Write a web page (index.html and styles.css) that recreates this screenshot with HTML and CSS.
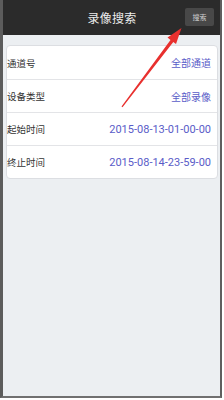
FILE: index.html
```html
<!DOCTYPE html>
<html>
<head>
<meta charset="utf-8">
<link rel="stylesheet" href="styles.css">
</head>
<body>
<div class="device">
  <header class="topbar">
    <div class="title">录像搜索</div>
    <button class="search-btn">搜索</button>
  </header>
  <main class="content">
    <div class="card">
      <div class="row"><span class="label">通道号</span><span class="value">全部通道</span></div>
      <div class="row"><span class="label">设备类型</span><span class="value">全部录像</span></div>
      <div class="row"><span class="label">起始时间</span><span class="value num">2015-08-13-01-00-00</span></div>
      <div class="row"><span class="label">终止时间</span><span class="value num">2015-08-14-23-59-00</span></div>
    </div>
  </main>
  <svg class="arrow" width="224" height="120" viewBox="0 0 224 120">
    <path d="M121.5 106.5 L170.5 40 L167.5 37.5 L181.5 28 L176 44 L173.3 42 L122.5 107.2 Z" fill="#e8302e"/>
  </svg>
</div>
</body>
</html>
```
FILE: styles.css
```css
html, body {
  margin: 0;
  padding: 0;
  background: #ffffff;
}
body {
  width: 224px;
  height: 400px;
  overflow: hidden;
  font-family: "Noto Sans CJK SC", "Roboto", sans-serif;
}
.device {
  position: relative;
  width: 222px;
  height: 398px;
  box-sizing: border-box;
  border-left: 3px solid #5c5c5c;
  border-right: 2px solid #5f5f5f;
  border-bottom: 2px solid #707070;
  display: flex;
  flex-direction: column;
  background: #eceff2;
}
.topbar {
  height: 35px;
  flex: none;
  background: #2b2b2b;
  display: flex;
  align-items: center;
  justify-content: center;
  position: relative;
}
.title {
  color: #ececec;
  font-size: 12px;
  letter-spacing: 0.3px;
  margin-left: 1px;
}
.search-btn {
  position: absolute;
  right: 6px;
  top: 8px;
  width: 29px;
  height: 18px;
  padding: 0;
  border: none;
  border-radius: 2px;
  background: #484848;
  color: #d0d0d0;
  font-family: "Noto Sans CJK SC", sans-serif;
  font-size: 7px;
  line-height: 18px;
}
.content {
  flex: 1;
  padding: 10px 2px 0 3px;
  background: #eceff2;
}
.card {
  background: #ffffff;
  border: 1px solid #dcdee2;
  border-radius: 4px;
}
.row {
  height: 32px;
  display: flex;
  align-items: center;
  justify-content: space-between;
  padding: 0 6px 0 0;
  border-top: 1px solid #e3e4e7;
}
.row:first-child {
  border-top: none;
  height: 33px;
}
.label {
  font-size: 9.5px;
  color: #333333;
}
.value {
  font-size: 10px;
  color: #5a5cc8;
}
.value.num {
  font-family: "Roboto", sans-serif;
  font-size: 11px;
}
.arrow {
  position: absolute;
  left: -3px;
  top: 0;
  pointer-events: none;
}
```
